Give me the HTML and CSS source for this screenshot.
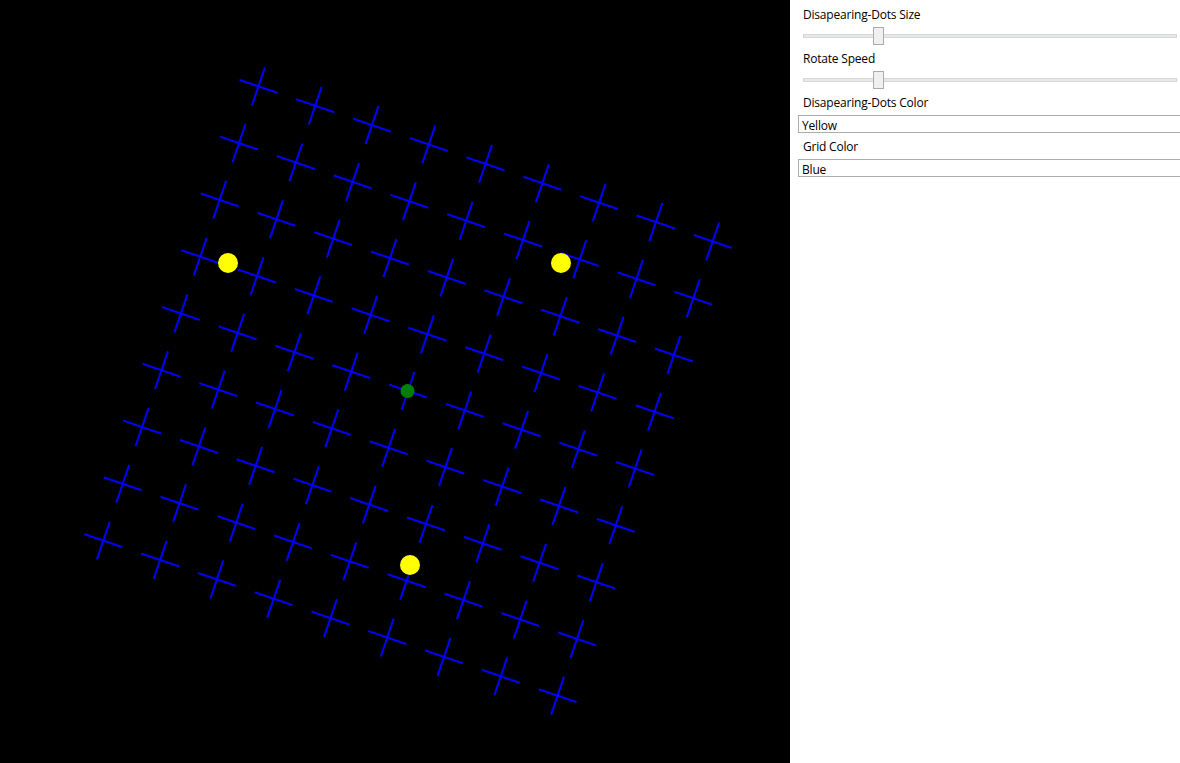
FILE: index.html
```html
<!DOCTYPE html>
<html>
<head>
<meta charset="utf-8">
<link rel="stylesheet" href="styles.css">
</head>
<body>
<div class="app">
  <div class="stage">
    <svg class="board" width="790" height="763" viewBox="0 0 790 763">
      <defs>
        <pattern id="cross" patternUnits="userSpaceOnUse" x="-30" y="-30" width="60" height="60">
          <line x1="10" y1="30" x2="50" y2="30" stroke="#0000ff" stroke-width="2"/>
          <line x1="30" y1="10" x2="30" y2="50" stroke="#0000ff" stroke-width="2"/>
        </pattern>
      </defs>
      <rect x="0" y="0" width="790" height="763" fill="#000"/>
      <g transform="translate(408 391) rotate(18.85)">
        <rect x="-270" y="-270" width="540" height="540" fill="url(#cross)"/>
      </g>
      <circle cx="228" cy="263" r="10" fill="#ffff00"/>
      <circle cx="561" cy="263" r="10" fill="#ffff00"/>
      <circle cx="410" cy="565" r="10" fill="#ffff00"/>
      <circle cx="407.5" cy="391" r="7" fill="#008000"/>
    </svg>
  </div>
  <div class="panel">
    <div class="label">Disapearing-Dots Size</div>
    <div class="slider"><div class="track"></div><div class="thumb"></div></div>
    <div class="label">Rotate Speed</div>
    <div class="slider"><div class="track"></div><div class="thumb"></div></div>
    <div class="label">Disapearing-Dots Color</div>
    <div class="combo">Yellow</div>
    <div class="label">Grid Color</div>
    <div class="combo">Blue</div>
  </div>
</div>
</body>
</html>
```
FILE: styles.css
```css
html, body {
  margin: 0;
  padding: 0;
  background: #ffffff;
}
body {
  width: 1180px;
  height: 763px;
  overflow: hidden;
  font-family: "Open Sans", "Noto Sans", sans-serif;
  font-size: 12px;
  color: #000;
}
.app {
  display: flex;
  width: 1180px;
  height: 763px;
}
.stage {
  width: 790px;
  height: 763px;
  flex: none;
  background: #000;
}
.board {
  display: block;
}
.panel {
  flex: 1;
  min-width: 0;
  overflow: hidden;
  background: #fff;
  padding-top: 1px;
  display: flex;
  flex-direction: column;
}
.label {
  padding: 6px 5px 4px 13px;
  line-height: 16px;
  height: 16px;
  white-space: nowrap;
  letter-spacing: -0.2px;
}
.slider {
  position: relative;
  height: 18px;
  margin: 0 3px 0 13px;
}
.track {
  position: absolute;
  left: 0;
  right: 0;
  top: 7px;
  height: 2px;
  background: #e7eaea;
  border: 1px solid #d6d6d6;
}
.thumb {
  position: absolute;
  left: 70px;
  top: 0;
  width: 9px;
  height: 16px;
  background: #f0f0f0;
  border: 1px solid #acacac;
}
.combo {
  margin-left: 8px;
  width: 420px;
  flex: none;
  height: 14px;
  padding-top: 2px;
  line-height: 16px;
  border: 1px solid #acacac;
  padding-left: 3px;
  white-space: nowrap;
  letter-spacing: -0.2px;
}
```
